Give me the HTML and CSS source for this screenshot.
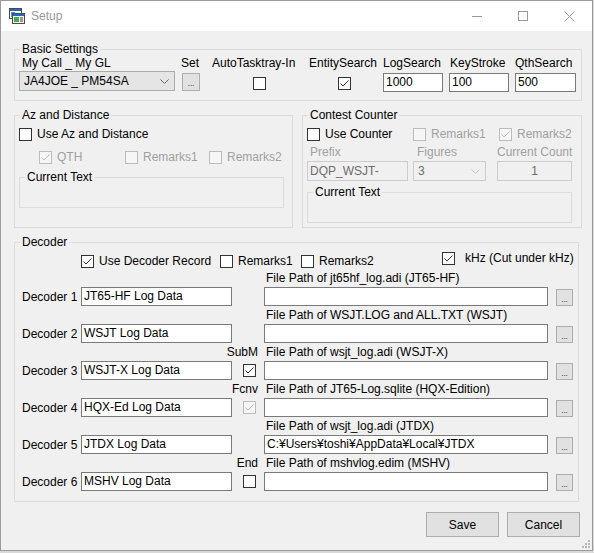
FILE: index.html
```html
<!DOCTYPE html>
<html>
<head>
<meta charset="utf-8">
<title>Setup</title>
<link rel="stylesheet" href="styles.css">
</head>
<body>
<div class="window">
  <div class="titlebar">
    <svg class="app-icon" viewBox="0 0 16 16" width="16" height="16">
      <rect x="0.5" y="0.5" width="12" height="10" fill="#fff" stroke="#4a4a4a"/>
      <rect x="1" y="1" width="11" height="2" fill="#2b66c2"/>
      <rect x="2" y="4" width="4" height="5" fill="#5a8fd6"/>
      <rect x="3.5" y="5.5" width="12" height="10" fill="#f4f4f4" stroke="#4a4a4a"/>
      <rect x="4" y="6" width="11" height="2" fill="#2b66c2"/>
      <rect x="5" y="9" width="5" height="5" fill="#3cae4a"/>
      <rect x="11" y="9" width="3" height="5" fill="#9a9a9a"/>
    </svg>
    <span class="title">Setup</span>
    <div class="caption">
      <span class="cap"><svg width="10" height="10" viewBox="0 0 10 10"><path d="M0 5.5H10" stroke="#999" stroke-width="1"/></svg></span>
      <span class="cap"><svg width="10" height="10" viewBox="0 0 10 10"><rect x="0.5" y="0.5" width="9" height="9" fill="none" stroke="#999"/></svg></span>
      <span class="cap"><svg width="11" height="11" viewBox="0 0 11 11"><path d="M0.5 0.5L10.5 10.5M10.5 0.5L0.5 10.5" stroke="#999" stroke-width="1"/></svg></span>
    </div>
  </div>

  <div class="client">
    <fieldset class="group basic">
      <legend>Basic Settings</legend>
      <div class="basic-cols">
        <div class="col c1">
          <div class="lbl">My Call _ My GL</div>
          <div class="combo"><span class="combo-text">JA4JOE _ PM54SA</span><svg class="chev" width="9" height="5" viewBox="0 0 9 5"><path d="M0.5 0.5L4.5 4.5L8.5 0.5" fill="none" stroke="#666"/></svg></div>
        </div>
        <div class="col c2">
          <div class="lbl">Set</div>
          <div class="btn-dots">...</div>
        </div>
        <div class="col c3">
          <div class="lbl">AutoTasktray-In</div>
          <span class="box"></span>
        </div>
        <div class="col c4">
          <div class="lbl">EntitySearch</div>
          <span class="box"><svg viewBox="0 0 11 11" width="11" height="11"><path d="M1.5 5.5L4 8L9.5 2.5" fill="none" stroke="#333" stroke-width="1"/></svg></span>
        </div>
        <div class="col c5">
          <div class="lbl">LogSearch</div>
          <div class="tb">1000</div>
        </div>
        <div class="col c6">
          <div class="lbl">KeyStroke</div>
          <div class="tb">100</div>
        </div>
        <div class="col c7">
          <div class="lbl">QthSearch</div>
          <div class="tb">500</div>
        </div>
      </div>
    </fieldset>

    <div class="mid">
      <fieldset class="group az">
        <legend>Az and Distance</legend>
        <div class="az-body">
          <label class="chk"><span class="box"></span>Use Az and Distance</label>
          <div class="chk-row az-row2">
            <label class="chk dis w86"><span class="box"><svg viewBox="0 0 11 11" width="11" height="11"><path d="M1.5 5.5L4 8L9.5 2.5" fill="none" stroke="#bcbcbc" stroke-width="1"/></svg></span>QTH</label>
            <label class="chk dis w84"><span class="box"></span>Remarks1</label>
            <label class="chk dis"><span class="box"></span>Remarks2</label>
          </div>
          <fieldset class="group sub">
            <legend>Current Text</legend>
            <div class="sub-body"></div>
          </fieldset>
        </div>
      </fieldset>

      <fieldset class="group contest">
        <legend>Contest Counter</legend>
        <div class="ct-body">
          <div class="chk-row">
            <label class="chk w106"><span class="box"></span>Use Counter</label>
            <label class="chk dis w86"><span class="box"></span>Remarks1</label>
            <label class="chk dis"><span class="box"><svg viewBox="0 0 11 11" width="11" height="11"><path d="M1.5 5.5L4 8L9.5 2.5" fill="none" stroke="#bcbcbc" stroke-width="1"/></svg></span>Remarks2</label>
          </div>
          <div class="ct-grid">
            <div class="lbl dis-t pl3">Prefix</div>
            <div class="lbl dis-t pl4">Figures</div>
            <div class="lbl dis-t">Current Count</div>
            <div class="tb dis-tb w101">DQP_WSJT-</div>
            <div class="combo dis-combo w73"><span class="combo-text">3</span><svg class="chev" width="9" height="5" viewBox="0 0 9 5"><path d="M0.5 0.5L4.5 4.5L8.5 0.5" fill="none" stroke="#c4c4c4"/></svg></div>
            <div class="tb dis-tb w75 center">1</div>
          </div>
          <fieldset class="group sub">
            <legend>Current Text</legend>
            <div class="sub-body"></div>
          </fieldset>
        </div>
      </fieldset>
    </div>

    <fieldset class="group decoder">
      <legend>Decoder</legend>
      <div class="dec-body">
        <div class="dec-opts">
          <label class="chk w139"><span class="box"><svg viewBox="0 0 11 11" width="11" height="11"><path d="M1.5 5.5L4 8L9.5 2.5" fill="none" stroke="#333" stroke-width="1"/></svg></span>Use Decoder Record</label>
          <label class="chk w81"><span class="box"></span>Remarks1</label>
          <label class="chk w141"><span class="box"></span>Remarks2</label>
          <label class="chk khz"><span class="box"><svg viewBox="0 0 11 11" width="11" height="11"><path d="M1.5 5.5L4 8L9.5 2.5" fill="none" stroke="#333" stroke-width="1"/></svg></span><span class="khz-t">kHz (Cut under kHz)</span></label>
        </div>
        <div class="dec-grid">
          <div class="g-flag"></div>
          <div class="g-plabel">File Path of jt65hf_log.adi (JT65-HF)</div>
          <div class="g-name">Decoder 1</div>
          <div class="tb">JT65-HF Log Data</div>
          <div class="g-check"></div>
          <div class="tb"></div>
          <div class="btn-dots small">...</div>

          <div class="g-flag"></div>
          <div class="g-plabel">File Path of WSJT.LOG and ALL.TXT (WSJT)</div>
          <div class="g-name">Decoder 2</div>
          <div class="tb">WSJT Log Data</div>
          <div class="g-check"></div>
          <div class="tb"></div>
          <div class="btn-dots small">...</div>

          <div class="g-flag">SubM</div>
          <div class="g-plabel">File Path of wsjt_log.adi (WSJT-X)</div>
          <div class="g-name">Decoder 3</div>
          <div class="tb">WSJT-X Log Data</div>
          <div class="g-check"><span class="box"><svg viewBox="0 0 11 11" width="11" height="11"><path d="M1.5 5.5L4 8L9.5 2.5" fill="none" stroke="#333" stroke-width="1"/></svg></span></div>
          <div class="tb"></div>
          <div class="btn-dots small">...</div>

          <div class="g-flag">Fcnv</div>
          <div class="g-plabel">File Path of JT65-Log.sqlite (HQX-Edition)</div>
          <div class="g-name">Decoder 4</div>
          <div class="tb">HQX-Ed Log Data</div>
          <div class="g-check"><span class="box dis-box"><svg viewBox="0 0 11 11" width="11" height="11"><path d="M1.5 5.5L4 8L9.5 2.5" fill="none" stroke="#bcbcbc" stroke-width="1"/></svg></span></div>
          <div class="tb"></div>
          <div class="btn-dots small">...</div>

          <div class="g-flag"></div>
          <div class="g-plabel">File Path of wsjt_log.adi (JTDX)</div>
          <div class="g-name">Decoder 5</div>
          <div class="tb">JTDX Log Data</div>
          <div class="g-check"></div>
          <div class="tb">C:¥Users¥toshi¥AppData¥Local¥JTDX</div>
          <div class="btn-dots small">...</div>

          <div class="g-flag">End</div>
          <div class="g-plabel">File Path of mshvlog.edim (MSHV)</div>
          <div class="g-name">Decoder 6</div>
          <div class="tb">MSHV Log Data</div>
          <div class="g-check"><span class="box"></span></div>
          <div class="tb"></div>
          <div class="btn-dots small">...</div>
        </div>
      </div>
    </fieldset>

    <div class="dialog-buttons">
      <button class="btn" type="button">Save</button>
      <button class="btn" type="button">Cancel</button>
    </div>
  </div>

  <svg class="grip" width="8" height="8" viewBox="0 0 8 8">
    <rect x="6" y="0" width="2" height="2" fill="#b8b8b8"/>
    <rect x="3" y="3" width="2" height="2" fill="#b8b8b8"/>
    <rect x="6" y="3" width="2" height="2" fill="#b8b8b8"/>
    <rect x="0" y="6" width="2" height="2" fill="#b8b8b8"/>
    <rect x="3" y="6" width="2" height="2" fill="#b8b8b8"/>
    <rect x="6" y="6" width="2" height="2" fill="#b8b8b8"/>
  </svg>
</div>
</body>
</html>
```

FILE: styles.css
```css
* { box-sizing: border-box; }

body {
  margin: 0;
  background: #d9d9d9;
  font-family: "Liberation Sans", Arial, sans-serif;
  font-size: 12px;
  color: #000;
}

.window {
  position: relative;
  width: 593px;
  height: 551px;
  border: 1px solid #9b9b9b;
  background: #f0f0f0;
  display: flex;
  flex-direction: column;
}

.titlebar {
  height: 30px;
  flex: none;
  background: #fff;
  display: flex;
  align-items: center;
}

.app-icon { margin-left: 8px; margin-right: 6px; flex: none; }

.title { color: #999; font-size: 12px; }

.caption { margin-left: auto; display: flex; }

.cap {
  width: 46px;
  height: 30px;
  display: flex;
  align-items: center;
  justify-content: center;
}

.client {
  flex: 1;
  display: flex;
  flex-direction: column;
  padding: 11px 0 0 13px;
}

.group {
  border: 1px solid #dcdcdc;
  margin: 0;
  padding: 0;
  min-width: 0;
}

.group > legend {
  margin-left: 5px;
  padding: 0 2px;
  line-height: 14px;
  font-size: 12px;
}

/* generic controls */
.lbl { height: 14px; line-height: 14px; white-space: nowrap; }

.box {
  width: 13px;
  height: 13px;
  flex: none;
  border: 1px solid #333;
  background: #fff;
  display: inline-flex;
  align-items: center;
  justify-content: center;
}

.tb {
  height: 19px;
  border: 1px solid #7a7a7a;
  background: #fff;
  padding-left: 2px;
  line-height: 17px;
  white-space: nowrap;
  overflow: hidden;
}

.combo {
  height: 20px;
  border: 1px solid #acacac;
  background: #e5e5e5;
  display: flex;
  align-items: center;
  padding-left: 4px;
  padding-right: 5px;
}

.combo-text { flex: 1; white-space: nowrap; }

.chev { flex: none; }

.btn-dots {
  width: 18px;
  height: 18px;
  border: 1px solid #adadad;
  background: #e1e1e1;
  font-size: 8px;
  line-height: 20px;
  text-align: center;
  overflow: hidden;
}

.chk {
  display: flex;
  align-items: center;
  height: 16px;
  white-space: nowrap;
}

.chk .box { margin-right: 5px; }

.chk-row { display: flex; }

.dis { color: #a0a0a0; }
.dis .box { border-color: #bcbcbc; background: #f6f6f6; }
.dis-t { color: #a0a0a0; }
.dis-box { border-color: #bcbcbc; background: #f6f6f6; }

.w73 { width: 73px; }
.w75 { width: 75px; }
.w81 { width: 81px; }
.w84 { width: 84px; }
.w86 { width: 86px; }
.w101 { width: 101px; }
.w106 { width: 106px; }
.w139 { width: 139px; }
.w141 { width: 141px; }
.pl3 { padding-left: 3px; }
.pl4 { padding-left: 4px; }
.center { text-align: center; padding-left: 0; }

/* Basic settings */
.basic { width: 568px; }

.basic-cols {
  display: flex;
  padding: 0 0 8px 4px;
}

.col { display: flex; flex-direction: column; height: 36px; flex: none; }

.c1 { width: 161px; }
.c1 .lbl { padding-left: 3px; }
.c1 .combo { width: 156px; margin-top: 1px; }

.c2 { width: 32px; }
.c2 .lbl { padding-left: 1px; }
.c2 .btn-dots { margin-top: 3px; margin-left: 2px; }

.c3 { width: 95px; }
.c3 .box { margin-top: 7px; margin-left: 41px; }

.c4 { width: 76px; }
.c4 .lbl { padding-left: 2px; }
.c4 .box { margin-top: 7px; margin-left: 31px; }

.c5, .c6 { width: 66px; }
.c5 .tb, .c6 .tb { width: 60px; margin-top: 3px; }
.c6 .lbl { padding-left: 1px; }
.c7 .tb { width: 61px; margin-top: 3px; }

/* middle groups */
.mid {
  display: flex;
  gap: 9px;
  margin-top: 7px;
}

.az { width: 279px; }
.contest { width: 280px; }

.az-body { padding: 4px 0 0 4px; }

.az-row2 { margin-top: 7px; padding-left: 20px; }

.sub { width: 265px; margin-top: 5px; }
.sub-body { height: 23px; }

.ct-body { padding: 4px 0 4px 4px; }

.ct-grid {
  display: grid;
  grid-template-columns: 106px 84px auto;
  grid-template-rows: 14px 20px;
  row-gap: 2px;
  margin-top: 3px;
  justify-items: start;
}

.dis-tb {
  height: 20px;
  border-color: #cccccc;
  background: #f0f0f0;
  color: #6d6d6d;
  line-height: 18px;
}

.dis-combo {
  border-color: #cccccc;
  background: #f0f0f0;
  color: #6d6d6d;
}

.ct-body .sub { margin-top: 4px; }

/* decoder */
.decoder { width: 565px; margin-top: 7px; }

.dec-body { padding: 4px 0 10px 7px; }

.dec-opts {
  display: flex;
  padding-left: 59px;
}

.khz { margin-top: -3px; }
.khz .box { margin-right: 10px; }

.dec-grid {
  display: grid;
  grid-template-columns: 59px 151px 32px 284px 25px;
  grid-template-rows: repeat(6, 18px 19px);
}

.g-flag {
  grid-column: 3;
  display: flex;
  justify-content: flex-end;
  align-items: center;
  padding-right: 6px;
  white-space: nowrap;
}

.g-plabel {
  grid-column: 4 / span 2;
  display: flex;
  align-items: center;
  padding-left: 2px;
  white-space: nowrap;
}

.g-name {
  grid-column: 1;
  display: flex;
  align-items: center;
  white-space: nowrap;
}

.g-check {
  display: flex;
  align-items: center;
  padding-left: 11px;
}

.btn-dots.small {
  width: 17px;
  height: 17px;
  margin-left: 8px;
  margin-top: 2px;
  line-height: 19px;
}

/* dialog buttons */
.dialog-buttons {
  display: flex;
  justify-content: flex-end;
  gap: 8px;
  margin-top: 10px;
  padding-right: 12px;
}

.btn {
  width: 73px;
  height: 25px;
  border: 1px solid #adadad;
  background: #e1e1e1;
  font-family: "Liberation Sans", Arial, sans-serif;
  font-size: 12px;
  color: #000;
  padding: 0;
}

.grip {
  position: absolute;
  right: 2px;
  bottom: 2px;
}
```
